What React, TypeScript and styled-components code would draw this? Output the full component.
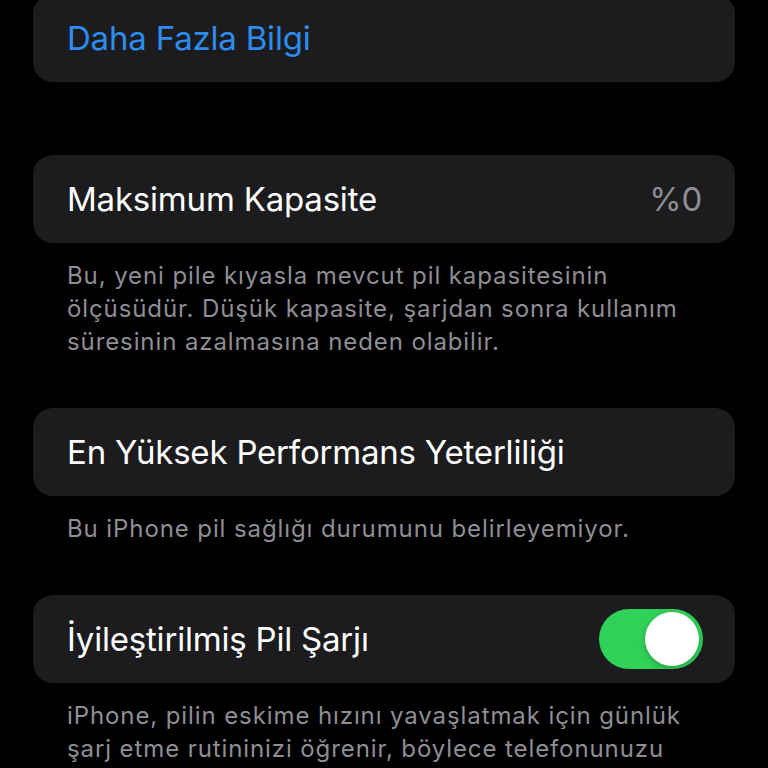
import React from "react";
import styled, { createGlobalStyle } from "styled-components";

const Global = createGlobalStyle`
  html, body { margin: 0; padding: 0; background: #000; }
  body { font-family: Inter, "Noto Sans", "Liberation Sans", sans-serif; -webkit-font-smoothing: antialiased; }
`;

const Page = styled.div`
  display: flex;
  flex-direction: column;
  padding: 0 33px;
  margin-top: -6px;
  width: 768px;
  box-sizing: border-box;
  overflow: hidden;
  height: 774px;
`;

const Card = styled.div<{ $gapAfter?: number }>`
  background: #1c1c1e;
  border-radius: 20px;
  height: 88px;
  display: flex;
  align-items: center;
  justify-content: space-between;
  padding: 0 33px 0 34px;
  box-sizing: border-box;
  flex-shrink: 0;
  margin-bottom: ${(p) => p.$gapAfter ?? 0}px;
`;

const Label = styled.span<{ $link?: boolean }>`
  font-size: 33px;
  letter-spacing: -0.2px;
  color: ${(p) => (p.$link ? "#2c8cf2" : "#ffffff")};
`;

const Value = styled.span`
  font-size: 33px;
  letter-spacing: -0.2px;
  color: #8e8e93;
`;

const Footer = styled.p`
  margin: 16px 0 50px;
  padding: 0 34px;
  font-size: 24px;
  line-height: 33px;
  letter-spacing: 0.9px;
  color: #8e8e93;
  flex-shrink: 0;
  white-space: nowrap;
`;

const Switch = styled.div<{ $on: boolean }>`
  width: 104px;
  height: 60px;
  border-radius: 30px;
  background: ${(p) => (p.$on ? "#30d158" : "#39393d")};
  display: flex;
  align-items: center;
  justify-content: ${(p) => (p.$on ? "flex-end" : "flex-start")};
  padding: 0 4px;
  box-sizing: border-box;
  margin-right: -1px;
`;

const Knob = styled.div`
  width: 54px;
  height: 54px;
  border-radius: 50%;
  background: #ffffff;
  box-shadow: 0 2px 6px rgba(0, 0, 0, 0.25);
`;

export default function App() {
  return (
    <>
      <Global />
      <Page>
        <Card $gapAfter={73}>
          <Label $link>Daha Fazla Bilgi</Label>
        </Card>
        <Card>
          <Label>Maksimum Kapasite</Label>
          <Value>%0</Value>
        </Card>
        <Footer>
          Bu, yeni pile kıyasla mevcut pil kapasitesinin
          <br />
          ölçüsüdür. Düşük kapasite, şarjdan sonra kullanım
          <br />
          süresinin azalmasına neden olabilir.
        </Footer>
        <Card>
          <Label>En Yüksek Performans Yeterliliği</Label>
        </Card>
        <Footer>Bu iPhone pil sağlığı durumunu belirleyemiyor.</Footer>
        <Card>
          <Label>İyileştirilmiş Pil Şarjı</Label>
          <Switch $on>
            <Knob />
          </Switch>
        </Card>
        <Footer>
          iPhone, pilin eskime hızını yavaşlatmak için günlük
          <br />
          şarj etme rutininizi öğrenir, böylece telefonunuzu
        </Footer>
      </Page>
    </>
  );
}
